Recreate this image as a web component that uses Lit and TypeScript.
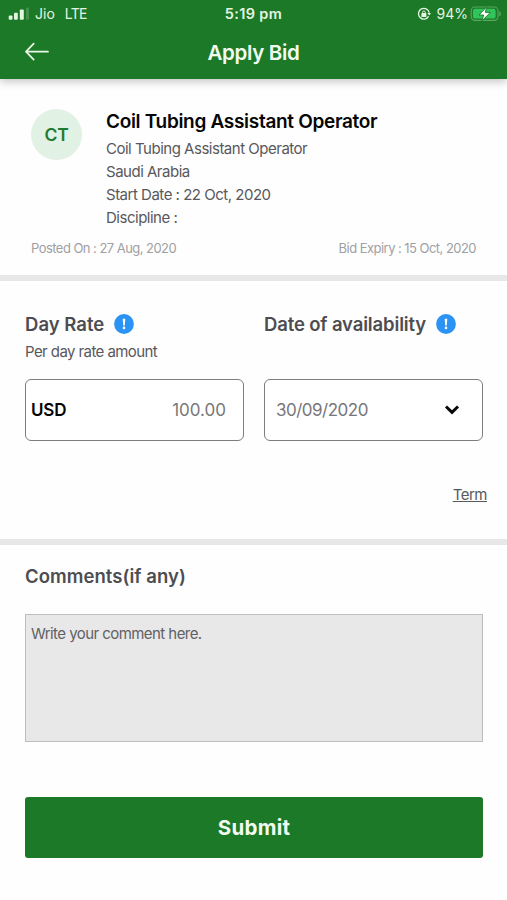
import { LitElement, html, css } from "lit";
import { customElement } from "lit/decorators.js";

@customElement("info-badge")
class InfoBadge extends LitElement {
  static styles = css`
    :host { display: block; width: 20px; height: 20px; }
    svg { display: block; }
  `;
  render() {
    return html`<svg width="20" height="20" viewBox="0 0 20 20">
      <circle cx="10" cy="10" r="9.9" fill="#2a93f3" />
      <path d="M8.7 4.8h2.6l-.5 6.6H9.2z" fill="#fff" />
      <circle cx="10" cy="13.9" r="1.3" fill="#fff" />
    </svg>`;
  }
}

@customElement("status-bar")
class StatusBar extends LitElement {
  static styles = css`
    :host {
      display: grid;
      grid-template-columns: 1fr auto 1fr;
      align-items: center;
      height: 28px;
      color: #e4f5e2;
      font-size: 14px;
      line-height: 28px;
    }
    .left, .right { display: flex; align-items: center; }
    .left { padding-left: 8px; }
    .right { justify-content: flex-end; padding-right: 5px; }
    .carrier { margin-left: 6px; }
    .network { margin-left: 10px; letter-spacing: -0.7px; }
    .time { font-size: 14.5px; font-weight: 600; letter-spacing: 0.35px; }
    .percent { margin: 0 2px 0 6px; }
    svg { display: block; }
  `;
  render() {
    return html`
      <div class="left">
        <svg width="21" height="14" viewBox="0 0 21 14">
          <g fill="#e4f5e2">
            <rect x="0.7" y="8.4" width="3.8" height="4.4" rx="1" />
            <rect x="6" y="5.8" width="3.8" height="7" rx="1" />
            <rect x="11.8" y="2.4" width="4" height="10.4" rx="1" />
            <rect x="18" y="0.4" width="3" height="12.4" rx="1" opacity="0.2" />
          </g>
        </svg>
        <span class="carrier">Jio</span>
        <span class="network">LTE</span>
      </div>
      <div class="time">5:19 pm</div>
      <div class="right">
        <svg width="14" height="14" viewBox="0 0 14 14" fill="none" stroke="#e4f5e2">
          <path d="M11.6 9.4A5.4 5.4 0 1 1 12.2 5.6" stroke-width="1.3" />
          <path d="M10.4 5.9H14l-1.8 2.7z" fill="#e4f5e2" stroke="none" />
          <rect x="4.4" y="6.1" width="5" height="3.9" rx="0.6" fill="#e4f5e2" stroke="none" />
          <path d="M5.5 6.6V5.4a1.4 1.4 0 0 1 2.8 0v1.2" stroke-width="1" />
        </svg>
        <span class="percent">94%</span>
        <svg width="32" height="16" viewBox="0 0 32 16">
          <rect x="1.2" y="1" width="26.8" height="13.4" rx="3.8" fill="none" stroke="#58a85d" stroke-width="1.1" />
          <rect x="3" y="2.8" width="22.6" height="9.8" rx="2.2" fill="#31c45a" />
          <path d="M29.2 5.4c2.2.5 2.2 4.3 0 4.8z" fill="#58a85d" />
          <path d="M16.6 1L9 9h4.600l-1.600 5.800L20.400 6.400h-5z" fill="#fff" stroke="#1c7927" stroke-width="0.9" />
        </svg>
      </div>
    `;
  }
}

@customElement("app-root")
class AppRoot extends LitElement {
  static styles = css`
    * { box-sizing: border-box; }
    :host {
      display: flex;
      flex-direction: column;
      height: 900px;
      background: #fefefe;
      overflow: hidden;
      color: #58585c;
      font-family: Inter, "Liberation Sans", sans-serif;
    }
    .top { background: #1c7927; height: 79px; flex: none; box-shadow: 0 3px 8px rgba(0, 0, 0, 0.22); }
    .nav {
      display: grid;
      grid-template-columns: 1fr auto 1fr;
      align-items: center;
      height: 48px;
      padding: 0 24px;
      color: #f2fbf0;
    }
    .nav svg { display: block; }
    .nav h1 { margin: 0; font-size: 20.5px; font-weight: 600; letter-spacing: -0.3px; }
    .job { padding: 30px 31px 0; height: 196px; flex: none; }
    .summary { display: flex; gap: 24px; }
    .avatar {
      width: 51px; height: 51px; flex: none;
      display: grid; place-items: center;
      border-radius: 50%;
      background: #e1f1e3;
      color: #1f7a31;
      font-size: 17.5px; font-weight: 600; letter-spacing: -0.3px;
    }
    .details { padding-top: 1px; font-size: 15px; line-height: 22.9px; letter-spacing: -0.49px; white-space: nowrap; }
    .details h2 { margin: 0 0 4.4px; color: #060606; font-size: 19px; line-height: 24px; font-weight: 600; letter-spacing: -0.31px; }
    .dates {
      display: flex; justify-content: space-between;
      margin-top: 9.2px;
      color: #a0a0a2; font-size: 13px; line-height: 18px; letter-spacing: -0.54px;
    }
    .divider { height: 6px; flex: none; background: #e7e7e7; }
    .rates {
      display: grid;
      grid-template-columns: 219px 219px;
      column-gap: 20px;
      grid-template-rows: 24px 31px 62px;
      padding: 31px 24px 0 25px;
      height: 258px;
      flex: none;
      align-content: start;
    }
    .label { display: flex; align-items: center; gap: 10px; height: 24px; white-space: nowrap; }
    h3 { margin: 0; color: #4d4d51; font-size: 18.5px; line-height: 24px; font-weight: 600; }
    .day { letter-spacing: 0.02px; }
    .avail { letter-spacing: -0.14px; }
    .heading { letter-spacing: 0.06px; }
    .hint { font-size: 15px; line-height: 31px; letter-spacing: -0.58px; }
    .field {
      display: flex; align-items: center; justify-content: space-between;
      margin-top: 12px;
      height: 62px;
      border: 1.5px solid #7d7d7d;
      border-radius: 6px;
      background: #fff;
      color: #77777a;
      font-size: 17px;
    }
    .amount { padding: 0 17px 1px 5px; }
    .date { padding: 0 22px 1px 11px; letter-spacing: -0.5px; }
    .currency { color: #050505; font-weight: 600; letter-spacing: -0.2px; }
    .term { grid-column: 1 / -1; justify-self: end; margin: 56px -4px 0 0; font-size: 15px; line-height: 20px; letter-spacing: -0.5px; color: #58585c; text-decoration: underline; }
    .comments { padding: 19px 24px 0 25px; }
    .comment-box {
      margin-top: 26px;
      height: 128px;
      padding: 9px 5px;
      border: 1.5px solid #bdbdbd;
      background: #e8e8e8;
      font-size: 15px; line-height: 20px; letter-spacing: -0.56px;
      color: #606064;
    }
    .submit {
      display: block;
      width: 100%;
      height: 61px;
      margin-top: 55px;
      padding: 0;
      border: 0;
      border-radius: 3px;
      background: #1c7927;
      color: #f2fbf0;
      font: 700 20.5px/61px Inter, "Liberation Sans", sans-serif;
      letter-spacing: 0.3px;
      text-align: center;
    }
  `;
  render() {
    return html`
      <header class="top">
        <status-bar></status-bar>
        <div class="nav">
          <svg width="26" height="20" viewBox="0 0 26 20" fill="none" stroke="#eaf8e8" stroke-width="1.7" stroke-linecap="round" stroke-linejoin="round">
            <path d="M24 9.700H2M9.700 1.700L2 9.700l7.700 8" />
          </svg>
          <h1>Apply Bid</h1>
        </div>
      </header>
      <section class="job">
        <div class="summary">
          <div class="avatar">CT</div>
          <div class="details">
            <h2>Coil Tubing Assistant Operator</h2>
            <div>Coil Tubing Assistant Operator</div>
            <div>Saudi Arabia</div>
            <div>Start Date : 22 Oct, 2020</div>
            <div>Discipline :</div>
          </div>
        </div>
        <div class="dates">
          <span>Posted On : 27 Aug, 2020</span>
          <span>Bid Expiry : 15 Oct, 2020</span>
        </div>
      </section>
      <div class="divider"></div>
      <section class="rates">
        <div class="label"><h3 class="day">Day Rate</h3><info-badge></info-badge></div>
        <div class="label"><h3 class="avail">Date of availability</h3><info-badge></info-badge></div>
        <div class="hint">Per day rate amount</div>
        <div></div>
        <div class="field amount"><span class="currency">USD</span><span>100.00</span></div>
        <div class="field date">
          <span>30/09/2020</span>
          <svg width="16" height="12" viewBox="0 0 16 12" fill="none" stroke="#080808" stroke-width="3">
            <path d="M2 2.5l6 5.8 6-5.8" />
          </svg>
        </div>
        <a class="term">Term</a>
      </section>
      <div class="divider"></div>
      <section class="comments">
        <h3 class="heading">Comments(if any)</h3>
        <div class="comment-box">Write your comment here.</div>
        <button class="submit">Submit</button>
      </section>
    `;
  }
}
